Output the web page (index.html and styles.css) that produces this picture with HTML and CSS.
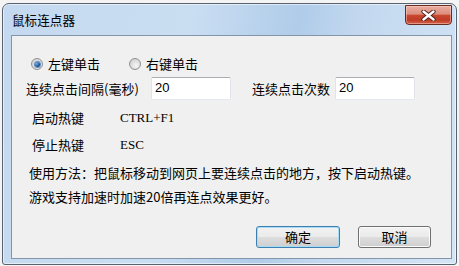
FILE: index.html
```html
<!DOCTYPE html>
<html lang="zh-CN">
<head>
<meta charset="utf-8">
<title>鼠标连点器</title>
<link rel="stylesheet" href="styles.css">
</head>
<body>
<div class="win">
  <div class="titlebar">
    <span class="title">鼠标连点器</span>
    <div class="close">
      <svg width="15" height="11" viewBox="0 0 15 11">
        <path d="M2.5 1.5 L12.5 9.5 M12.5 1.5 L2.5 9.5" stroke="#4a1d16" stroke-width="4.2" stroke-linecap="round" fill="none"/>
        <path d="M2.5 1.5 L12.5 9.5 M12.5 1.5 L2.5 9.5" stroke="#ffffff" stroke-width="2.4" stroke-linecap="round" fill="none"/>
      </svg>
    </div>
  </div>
  <div class="client">
    <div class="row radios">
      <label class="radio r1"><span class="dot on"></span>左键单击</label>
      <label class="radio"><span class="dot"></span>右键单击</label>
    </div>
    <div class="row fields">
      <span class="lbl1">连续点击间隔(毫秒)</span><span class="input">20</span>
      <span class="lbl2">连续点击次数</span><span class="input">20</span>
    </div>
    <div class="row hk"><span class="hkl">启动热键</span><span class="hkv">CTRL+F1</span></div>
    <div class="row hk hk2"><span class="hkl">停止热键</span><span class="hkv">ESC</span></div>
    <div class="row usage">使用方法：把鼠标移动到网页上要连续点击的地方，按下启动热键。</div>
    <div class="row usage u2">游戏支持加速时加速20倍再连点效果更好。</div>
    <div class="buttons">
      <span class="btn ok">确定</span><span class="btn cancel">取消</span>
    </div>
  </div>
</div>
</body>
</html>
```
FILE: styles.css
```css
html, body {
  margin: 0;
  padding: 0;
}
body {
  width: 459px;
  height: 266px;
  overflow: hidden;
  background: #f4f4f4;
  font-family: "Noto Sans CJK SC", "Noto Sans", sans-serif;
  font-size: 13px;
  color: #000;
}
.win {
  box-sizing: border-box;
  margin: 3px 0 0 2px;
  width: 455px;
  height: 262px;
  border: 1px solid #59626e;
  border-radius: 7px 7px 3px 3px;
  padding: 0 4px 5px 8px;
  background: linear-gradient(100deg, #c4d9ef 0%, #cadef2 38%, #b0cce9 60%, #c3d8ef 72%, #d3e4f5 100%);
  box-shadow: inset 0 0 0 1px rgba(255,255,255,0.55);
  display: flex;
  flex-direction: column;
}
.titlebar {
  height: 31px;
  display: flex;
  justify-content: space-between;
  align-items: flex-start;
}
.title {
  margin-top: 8px;
  padding-left: 1px;
  line-height: 16px;
  font-size: 12.6px;
  color: #000;
}
.close {
  box-sizing: border-box;
  margin-top: 1px;
  width: 47px;
  height: 20px;
  border: 1px solid #6a2a20;
  border-radius: 0 0 4px 4px;
  background: linear-gradient(#eaaea1 0%, #dc8e7e 45%, #c8472f 52%, #c03b26 78%, #d6634a 100%);
  box-shadow: inset 0 0 0 1px rgba(255,220,210,0.45);
  display: flex;
  align-items: center;
  justify-content: center;
}
.close svg {
  display: block;
}
.client {
  box-sizing: border-box;
  width: 441px;
  height: 224px;
  border: 1px solid #8295ab;
  background: #f0f0f0;
  display: flex;
  flex-direction: column;
}
.row {
  display: flex;
  align-items: center;
  line-height: 16px;
  height: 16px;
  white-space: nowrap;
}
.radios {
  margin-top: 20px;
  padding-left: 19px;
}
.radio {
  display: flex;
  align-items: center;
}
.r1 {
  width: 98px;
}
.dot {
  box-sizing: border-box;
  width: 12px;
  height: 12px;
  border-radius: 50%;
  border: 1px solid #8f9091;
  background: radial-gradient(circle at 60% 65%, #f6f6f6 0%, #dcdcdc 55%, #c9c9c9 100%);
  margin-right: 5px;
  display: flex;
  align-items: center;
  justify-content: center;
}
.dot.on::after {
  content: "";
  width: 5px;
  height: 5px;
  border-radius: 50%;
  background: radial-gradient(circle at 35% 35%, #7fb0e6 0%, #1d4f8f 60%, #0d2b55 100%);
  box-shadow: 0 0 0 1px #5d8fc7;
}
.fields {
  margin-top: 5px;
  height: 23px;
  padding-left: 14px;
}
.lbl1 {
  width: 125px;
}
.lbl2 {
  margin-left: 21px;
  width: 83px;
}
.input {
  box-sizing: border-box;
  width: 80px;
  height: 23px;
  background: #fff;
  border: 1px solid #e2e3ea;
  border-top-color: #abadb3;
  border-bottom-color: #e3e9ef;
  border-radius: 2px;
  padding: 1px 0 0 3px;
  line-height: 17px;
  font-family: "Liberation Sans", Arial, sans-serif;
  font-size: 13px;
}
.hk {
  margin-top: 10px;
  padding-left: 20px;
}
.hk2 {
  margin-top: 11px;
}
.hkl {
  width: 88px;
}
.hkv {
  font-family: "Liberation Serif", "Times New Roman", serif;
  font-size: 13px;
}
.usage {
  margin-top: 12px;
  padding-left: 17px;
}
.u2 {
  margin-top: 8px;
}
.buttons {
  margin-top: 21px;
  padding-left: 244px;
  display: flex;
}
.btn {
  box-sizing: border-box;
  height: 22px;
  border-radius: 3px;
  display: flex;
  align-items: center;
  justify-content: center;
  line-height: 16px;
  background: linear-gradient(#f2f2f2 0%, #ebebeb 48%, #dddddd 52%, #cfcfcf 100%);
}
.ok {
  width: 84px;
  border: 1px solid #3c7fb1;
  box-shadow: inset 0 0 0 1px #a6dcf6;
}
.cancel {
  width: 73px;
  margin-left: 18px;
  border: 1px solid #707070;
  box-shadow: inset 0 0 0 1px #fbfbfb;
}
```
